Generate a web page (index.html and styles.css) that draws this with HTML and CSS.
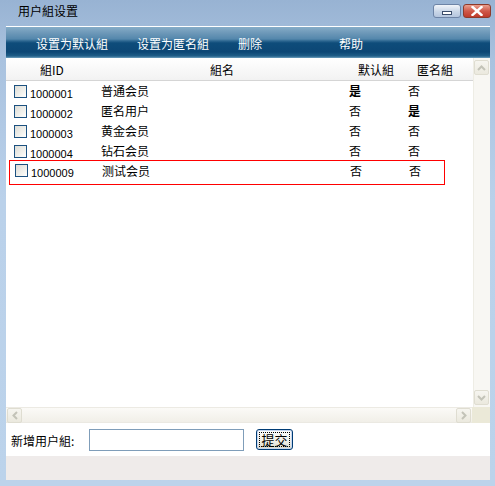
FILE: index.html
```html
<!DOCTYPE html>
<html lang="zh">
<head>
<meta charset="utf-8">
<title>用户組设置</title>
<link rel="stylesheet" href="styles.css">
</head>
<body>
<div class="window">
  <div class="titlebar">
    <span class="title">用户組设置</span>
    <div class="caption-buttons">
      <span class="cap-btn min"><span class="min-bar"></span></span>
      <span class="cap-btn close">
        <svg width="12" height="10" viewBox="0 0 12 10"><path d="M1.5 1 L10.5 9 M10.5 1 L1.5 9" stroke="#fff" stroke-width="2.4" stroke-linecap="square"/></svg>
      </span>
    </div>
  </div>
  <div class="frame">
    <div class="toolbar">
      <span class="tool">设置为默认組</span>
      <span class="tool">设置为匿名組</span>
      <span class="tool">删除</span>
      <span class="tool">帮助</span>
    </div>
    <div class="list-area">
      <div class="table">
        <div class="head">
          <span class="c-id">組ID</span>
          <span class="c-name">組名</span>
          <span class="c-def">默认組</span>
          <span class="c-anon">匿名組</span>
        </div>
        <div class="row"><span class="check"></span><span class="id">1000001</span><span class="name">普通会员</span><span class="def bold">是</span><span class="anon">否</span></div>
        <div class="row"><span class="check"></span><span class="id">1000002</span><span class="name">匿名用户</span><span class="def">否</span><span class="anon bold">是</span></div>
        <div class="row"><span class="check"></span><span class="id">1000003</span><span class="name">黄金会员</span><span class="def">否</span><span class="anon">否</span></div>
        <div class="row"><span class="check"></span><span class="id">1000004</span><span class="name">钻石会员</span><span class="def">否</span><span class="anon">否</span></div>
        <div class="row selected"><span class="check"></span><span class="id">1000009</span><span class="name">测试会员</span><span class="def">否</span><span class="anon">否</span></div>
      </div>
      <div class="vscroll">
        <span class="sb-btn"><svg width="9" height="6" viewBox="0 0 9 6"><path d="M1 5 L4.5 1.5 L8 5" fill="none" stroke="#c3c3b8" stroke-width="2"/></svg></span>
        <span class="sb-track"></span>
        <span class="sb-btn"><svg width="9" height="6" viewBox="0 0 9 6"><path d="M1 1 L4.5 4.5 L8 1" fill="none" stroke="#c3c3b8" stroke-width="2"/></svg></span>
      </div>
    </div>
    <div class="hscroll">
      <span class="sb-btn"><svg width="6" height="9" viewBox="0 0 6 9"><path d="M5 1 L1.5 4.5 L5 8" fill="none" stroke="#c3c3b8" stroke-width="2"/></svg></span>
      <span class="sb-htrack"></span>
      <span class="sb-btn"><svg width="6" height="9" viewBox="0 0 6 9"><path d="M1 1 L4.5 4.5 L1 8" fill="none" stroke="#c3c3b8" stroke-width="2"/></svg></span>
      <span class="corner"></span>
    </div>
    <div class="add-row">
      <span class="add-label">新增用户組:</span>
      <input class="add-input" type="text">
      <button class="submit" type="button"><span class="focus">提交</span></button>
    </div>
    <div class="footer"></div>
  </div>
</div>
</body>
</html>
```
FILE: styles.css
```css
* { box-sizing: border-box; }

html, body {
  margin: 0;
  padding: 0;
}

body {
  width: 495px;
  height: 486px;
  overflow: hidden;
  font-family: "Noto Sans CJK SC", "Liberation Sans", sans-serif;
  font-size: 12px;
  color: #000;
}

.window {
  height: 486px;
  display: flex;
  flex-direction: column;
  background: linear-gradient(#98b3d3 0px, #a9c2df 60px, #bad1ea 200px, #bcd3eb 486px);
}

.titlebar {
  height: 26px;
  display: flex;
  align-items: center;
  justify-content: space-between;
  padding: 0 4px 0 18px;
}

.title {
  font-size: 12px;
  line-height: 12px;
  margin-top: -4px;
}

.caption-buttons {
  display: flex;
  gap: 2px;
  margin-top: -4px;
}

.cap-btn {
  width: 28px;
  height: 14px;
  border-radius: 3px;
  display: flex;
  align-items: center;
  justify-content: center;
}

.cap-btn.min {
  border: 1px solid #6d84a6;
  background: linear-gradient(#f1f5fa, #c9d6e7 55%, #b5c6de);
}

.min-bar {
  width: 10px;
  height: 4px;
  border: 1px solid #3b4d6b;
  background: #fff;
  margin-top: 3px;
}

.cap-btn.close {
  border: 1px solid #8d3a2b;
  background: linear-gradient(#eaa08f, #d0594a 50%, #bf3b2b);
}

.frame {
  flex: 1;
  margin: 0 5px 6px 6px;
  border-top: 1px solid #fff;
  display: flex;
  flex-direction: column;
  background: #fff;
}

.toolbar {
  height: 31px;
  display: flex;
  align-items: center;
  padding-left: 30px;
  background: linear-gradient(#86adc8 0px, #6d98b8 6px, #5487ac 12px, #2c6690 14px, #0e4c7a 16px, #0c4775 25px, #1f5e88 29px, #6f9fbd 31px);
}

.tool {
  width: 101px;
  color: #fff;
  font-size: 12px;
  line-height: 12px;
  margin-top: 2px;
}

.list-area {
  height: 349px;
  display: flex;
}

.table {
  flex: 1;
  display: flex;
  flex-direction: column;
  padding-left: 2px;
}

.head {
  height: 23px;
  display: flex;
  align-items: center;
  border-bottom: 1px solid #d5d5d5;
  background: linear-gradient(#ffffff, #f2f2f2);
  margin-left: -2px;
  padding-left: 2px;
}

.head span {
  line-height: 12px;
  margin-top: 2px;
}

.c-id { width: 32px; margin-left: 32px; }
.c-name { margin-left: 138px; }
.c-def { margin-left: 124px; }
.c-anon { margin-left: 23px; }

.row {
  height: 20px;
  display: flex;
  align-items: center;
  padding-left: 6px;
}

.row.selected {
  height: 25px;
  margin-left: 1px;
  width: 436px;
  padding-left: 5px;
  padding-bottom: 5px;
  border: 1px solid #ff0000;
  margin-top: -1px;
  padding-top: 1px;
}

.check {
  width: 13px;
  height: 13px;
  border: 1px solid #1c5180;
  background: linear-gradient(135deg, #dcdcd6, #f4f4f0 70%, #ffffff);
  margin-right: 3px;
}

.id {
  width: 71px;
  font-family: "Liberation Sans", sans-serif;
  font-size: 11px;
  margin-top: 5px;
}

.name {
  width: 248px;
  line-height: 12px;
}

.def {
  width: 59px;
}

.bold { font-weight: bold; }

.def, .anon {
  line-height: 12px;
}

.vscroll {
  width: 17px;
  display: flex;
  flex-direction: column;
  background: #f8f7f3;
  border-left: 1px solid #eeede5;
  padding: 2px 1px 2px 0;
}

.sb-btn {
  width: 15px;
  height: 15px;
  border: 1px solid #dfddd1;
  border-radius: 2px;
  background: linear-gradient(#f6f5f0, #ebe9de);
  display: flex;
  align-items: center;
  justify-content: center;
  flex: none;
}

.sb-track { flex: 1; }

.hscroll {
  height: 16px;
  display: flex;
  align-items: center;
  padding-left: 1px;
  background: linear-gradient(#fbfaf7, #f1efe8);
  border-top: 1px solid #eceae3;
  border-bottom: 1px solid #ebe9e2;
}

.sb-htrack { flex: 1; }

.corner {
  width: 18px;
  height: 16px;
  background: #ebe9d8;
  margin-left: 1px;
}

.add-row {
  height: 33px;
  display: flex;
  align-items: center;
  padding-left: 5px;
  background: #fff;
}

.add-label {
  width: 78px;
  margin-top: 2px;
}

.add-input {
  width: 155px;
  height: 22px;
  border: 1px solid #7f9db9;
  margin: 0;
  padding: 0 2px;
  font: inherit;
  background: #fff;
}

.submit {
  margin: -1px 0 0 12px;
  width: 37px;
  height: 21px;
  padding: 2px;
  border: 1px solid #003c74;
  border-radius: 3px;
  background: linear-gradient(#ffffff, #f0efe8 60%, #dcd8c8);
  box-shadow: inset 0 0 0 1px #c6d6f0;
  font-family: "Noto Sans CJK SC", sans-serif;
  font-size: 13px;
  color: #000;
  display: flex;
}

.focus {
  flex: 1;
  border: 1px dotted #000;
  line-height: 13px;
  display: flex;
  align-items: center;
  justify-content: center;
}

.footer {
  height: 24px;
  background: #efebea;
}
```
